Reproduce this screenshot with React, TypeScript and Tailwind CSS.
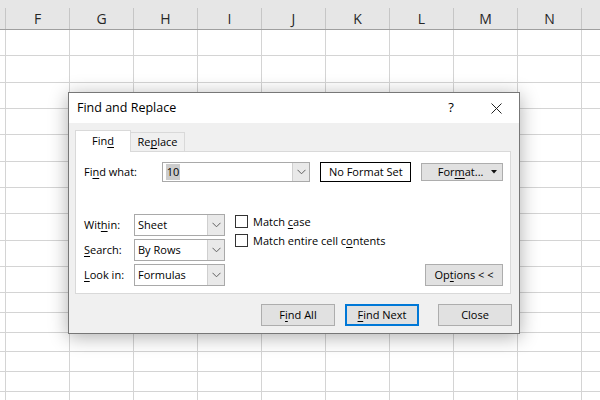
import React from 'react';

const COLS = ['F', 'G', 'H', 'I', 'J', 'K', 'L', 'M', 'N'];
// bottom gridline of each visible row sits at 55, 82, 108 ... 391
const ROW_HEIGHTS = [26, 27, 26, 26, 27, 26, 26, 27, 26, 26, 20, 20, 19, 20, 20, 20];

const U: React.FC<{ children: React.ReactNode }> = ({ children }) => (
  <span className="underline decoration-1 underline-offset-[2px]">{children}</span>
);

const Chevron = () => (
  <svg width="9" height="6" viewBox="0 0 9 6">
    <polyline points="0.5,0.8 4.5,4.8 8.5,0.8" fill="none" stroke="#606060" strokeWidth="1" />
  </svg>
);

const Combo: React.FC<{ w: string; h: string; children: React.ReactNode }> = ({ w, h, children }) => (
  <div className={`flex ${w} ${h} border border-[#a9a9a9] bg-white`}>
    <div className="flex-1 flex items-center pl-[3px] overflow-hidden">{children}</div>
    <div className="w-[17px] flex items-center justify-center bg-[#e9e9e9] border-l border-[#cfcfcf]">
      <Chevron />
    </div>
  </div>
);

const Checkbox: React.FC<{ children: React.ReactNode }> = ({ children }) => (
  <div className="flex items-center gap-[5px] h-[13px]">
    <div className="w-[13px] h-[13px] border border-[#333] bg-white" />
    <span className="leading-[13px]">{children}</span>
  </div>
);

const Btn: React.FC<{ w: string; focused?: boolean; children: React.ReactNode }> = ({ w, focused, children }) => (
  <div
    className={`${w} h-[22px] flex items-center justify-center bg-[#e1e1e1] ${
      focused ? 'border-2 border-[#0078d7]' : 'border border-[#adadad]'
    }`}
  >
    {children}
  </div>
);

const Sheet = () => (
  <div className="flex flex-col">
    <div className="flex h-[30px] bg-[#e6e6e6] border-b border-[#9f9f9f] font-['Open_Sans',sans-serif] text-[14px] text-[#262626]">
      <div className="w-[6px] h-full flex items-end">
        <div className="w-full h-[21px] border-r border-[#c6c6c6]" />
      </div>
      {COLS.map((c) => (
        <div key={c} className="w-[64px] h-full flex items-end">
          <div className="w-full h-[21px] border-r border-[#c6c6c6] flex items-center justify-center">{c}</div>
        </div>
      ))}
      <div className="flex-1" />
    </div>
    {ROW_HEIGHTS.map((h, i) => (
      <div key={i} className="flex border-b border-[#d4d4d4]" style={{ height: h }}>
        <div className="w-[6px] border-r border-[#d4d4d4]" />
        {COLS.map((c) => (
          <div key={c} className="w-[64px] border-r border-[#d4d4d4]" />
        ))}
        <div className="flex-1" />
      </div>
    ))}
  </div>
);

export default function App() {
  return (
    <div className="relative w-[600px] h-[400px] overflow-hidden bg-white">
      <Sheet />

      <div className="absolute left-[68px] top-[92px] w-[452px] h-[242px] flex flex-col border border-[#777] bg-[#f0f0f0] shadow-[0_3px_18px_rgba(0,0,0,0.32)] font-['Open_Sans',sans-serif] text-[11px] text-black">
        {/* title bar */}
        <div className="h-[30px] flex items-center bg-white">
          <div className="pl-[8px] text-[12.5px]">Find and Replace</div>
          <div className="ml-auto flex h-full">
            <div className="w-[46px] flex items-center justify-center text-[13px]">?</div>
            <div className="w-[45px] flex items-center justify-center">
              <svg width="11" height="11" viewBox="0 0 11 11">
                <path d="M0.5 0.5L10.5 10.5M10.5 0.5L0.5 10.5" stroke="#222" strokeWidth="1" />
              </svg>
            </div>
          </div>
        </div>

        <div className="flex-1 flex flex-col pl-[6px] pr-[8px]">
          {/* tabs */}
          <div className="mt-[7px] h-[22px] flex items-end">
            <div className="relative z-10 w-[56px] h-[22px] flex items-center justify-center bg-white border border-b-0 border-[#d9d9d9]">
              Fin<U>d</U>
            </div>
            <div className="w-[54px] h-[20px] flex items-center justify-center border border-l-0 border-b-0 border-[#d9d9d9]">
              Re<U>p</U>lace
            </div>
          </div>

          {/* panel */}
          <div className="-mt-px h-[143px] flex flex-col justify-between bg-white border border-[#d9d9d9] pt-[10px] pl-[8px] pr-[7px] pb-[7px]">
            <div className="flex items-center h-[20px]">
              <div className="w-[78px]">
                Fi<U>n</U>d what:
              </div>
              <Combo w="w-[149px]" h="h-[20px]">
                <span className="bg-[#cccccc] px-[1px] leading-[16px]">10</span>
              </Combo>
              <div className="ml-[10px] w-[91px] h-[20px] flex items-center justify-center border border-black">
                No Format Set
              </div>
              <div className="ml-[10px] w-[82px] h-[18px] flex items-center bg-[#e1e1e1] border border-[#adadad]">
                <span className="flex-1 text-center pl-[8px]">
                  For<U>m</U>at...
                </span>
                <svg width="6" height="4" viewBox="0 0 6 4" className="mr-[5px]">
                  <polygon points="0,0 6,0 3,3.5" fill="#111" />
                </svg>
              </div>
            </div>

            <div className="flex items-end">
              <div className="flex flex-col gap-[3px]">
                <div className="flex items-center">
                  <div className="w-[50px]">
                    Wit<U>h</U>in:
                  </div>
                  <Combo w="w-[91px]" h="h-[22px]">Sheet</Combo>
                </div>
                <div className="flex items-center">
                  <div className="w-[50px]">
                    <U>S</U>earch:
                  </div>
                  <Combo w="w-[91px]" h="h-[22px]">By Rows</Combo>
                </div>
                <div className="flex items-center">
                  <div className="w-[50px]">
                    <U>L</U>ook in:
                  </div>
                  <Combo w="w-[91px]" h="h-[22px]">Formulas</Combo>
                </div>
              </div>

              <div className="self-start ml-[10px] pt-[1px] flex flex-col gap-[6px]">
                <Checkbox>
                  Match <U>c</U>ase
                </Checkbox>
                <Checkbox>
                  Match entire cell c<U>o</U>ntents
                </Checkbox>
              </div>

              <div className="ml-auto">
                <Btn w="w-[78px]">
                  Op<U>t</U>ions &lt; &lt;
                </Btn>
              </div>
            </div>
          </div>

          {/* buttons */}
          <div className="mt-[10px] -mr-px flex justify-end">
            <Btn w="w-[74px]">
              F<U>i</U>nd All
            </Btn>
            <div className="ml-[10px]">
              <Btn w="w-[74px]" focused>
                <U>F</U>ind Next
              </Btn>
            </div>
            <div className="ml-[19px]">
              <Btn w="w-[74px]">Close</Btn>
            </div>
          </div>
        </div>
      </div>
    </div>
  );
}
